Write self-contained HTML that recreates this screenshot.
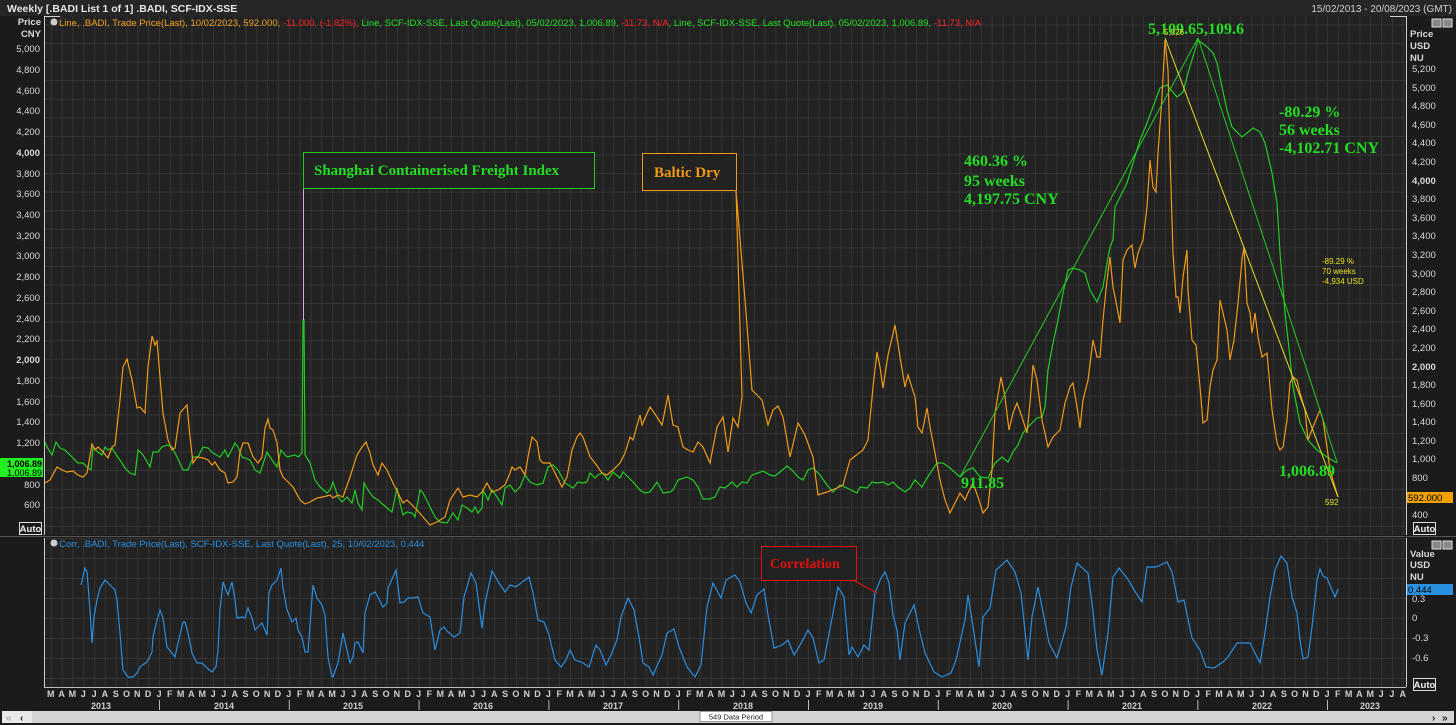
<!DOCTYPE html>
<html><head><meta charset="utf-8"><style>
html,body{margin:0;padding:0;background:#1b1b1b;}
svg{display:block;font-family:"Liberation Sans",sans-serif;}
</style></head><body>
<svg width="1456" height="725" viewBox="0 0 1456 725" xmlns="http://www.w3.org/2000/svg">
<defs>
<pattern id="gm" x="29.2" y="5.9" width="10.815" height="18.57" patternUnits="userSpaceOnUse">
<rect width="10.815" height="18.57" fill="#222"/>
<line x1="0.5" y1="0" x2="0.5" y2="18.57" stroke="#343434" stroke-width="1"/>
<line x1="0" y1="0.5" x2="10.815" y2="0.5" stroke="#343434" stroke-width="1"/>
</pattern>
<pattern id="gl" x="29.2" y="558" width="10.815" height="20" patternUnits="userSpaceOnUse">
<rect width="10.815" height="20" fill="#222"/>
<line x1="0.5" y1="0" x2="0.5" y2="20" stroke="#343434" stroke-width="1"/>
<line x1="0" y1="0.5" x2="10.815" y2="0.5" stroke="#343434" stroke-width="1"/>
</pattern>
</defs>
<rect width="1456" height="725" fill="#1b1b1b"/>
<rect x="0" y="0" width="1456" height="16" fill="#262626"/>
<text x="7" y="12" font-size="10.5" font-weight="bold" fill="#e6e6e6">Weekly [.BADI List 1 of 1] .BADI, SCF-IDX-SSE</text>
<text x="1452" y="12" font-size="10" fill="#d0d0d0" text-anchor="end">15/02/2013 - 20/08/2023 (GMT)</text>
<rect x="45" y="16" width="1361" height="519" fill="url(#gm)"/>
<rect x="45" y="538" width="1361" height="149" fill="url(#gl)"/>
<line x1="44.5" y1="16" x2="44.5" y2="535" stroke="#cfcfcf"/>
<line x1="1406.5" y1="16" x2="1406.5" y2="535" stroke="#cfcfcf"/>
<line x1="44.5" y1="538" x2="44.5" y2="687" stroke="#cfcfcf"/>
<line x1="1406.5" y1="538" x2="1406.5" y2="687" stroke="#cfcfcf"/>
<line x1="0" y1="536.5" x2="1456" y2="536.5" stroke="#555"/>
<line x1="44" y1="687.5" x2="1406" y2="687.5" stroke="#bbb"/>
<line x1="44" y1="16.5" x2="60" y2="16.5" stroke="#cfcfcf"/>
<line x1="1390" y1="16.5" x2="1406" y2="16.5" stroke="#cfcfcf"/>
<rect x="1432" y="19" width="9" height="8" fill="#888" stroke="#ddd"/><rect x="1443" y="19" width="9" height="8" fill="#888" stroke="#ddd"/>
<rect x="1432" y="541" width="9" height="8" fill="#888" stroke="#ddd"/><rect x="1443" y="541" width="9" height="8" fill="#888" stroke="#ddd"/>
<circle cx="54" cy="22" r="3.5" fill="#ccc"/>
<text x="59" y="26" font-size="9.5"><tspan fill="#f0a020">Line, .BADI, Trade Price(Last), 10/02/2023, 592.000, </tspan><tspan fill="#ff2020">-11.000, (-1.82%), </tspan><tspan fill="#20e020">Line, SCF-IDX-SSE, Last Quote(Last), 05/02/2023, 1,006.89, </tspan><tspan fill="#ff2020">-11.73, N/A</tspan><tspan fill="#20e020">, Line, SCF-IDX-SSE, Last Quote(Last), 05/02/2023, 1,006.89, </tspan><tspan fill="#ff2020">-11.73, N/A</tspan></text>
<circle cx="54" cy="543" r="3.5" fill="#ccc"/>
<text x="59" y="547" font-size="9.5" fill="#2a90e0">Corr, .BADI, Trade Price(Last), SCF-IDX-SSE, Last Quote(Last),  25,  10/02/2023, 0.444</text>
<g font-size="9.5" fill="#d8d8d8" text-anchor="end">
<text x="41" y="25" font-weight="bold">Price</text><text x="41" y="37" font-weight="bold">CNY</text>
<text x="40" y="52">5,000</text><text x="40" y="73">4,800</text><text x="40" y="94">4,600</text><text x="40" y="114">4,400</text><text x="40" y="135">4,200</text><text x="40" y="156" font-weight="bold">4,000</text><text x="40" y="177">3,800</text><text x="40" y="197">3,600</text><text x="40" y="218">3,400</text><text x="40" y="239">3,200</text><text x="40" y="259">3,000</text><text x="40" y="280">2,800</text><text x="40" y="301">2,600</text><text x="40" y="322">2,400</text><text x="40" y="342">2,200</text><text x="40" y="363" font-weight="bold">2,000</text><text x="40" y="384">1,800</text><text x="40" y="405">1,600</text><text x="40" y="425">1,400</text><text x="40" y="446">1,200</text><text x="40" y="488">800</text><text x="40" y="508">600</text>
</g>
<rect x="0" y="458" width="43" height="19" fill="#22ee22"/>
<text x="42" y="467" font-size="9" font-weight="bold" fill="#000" text-anchor="end">1,006.89</text>
<text x="42" y="476" font-size="9" fill="#000" text-anchor="end">1,006.89</text>
<rect x="19.5" y="522.5" width="22" height="12" fill="#1b1b1b" stroke="#ddd"/>
<text x="30.5" y="532" font-size="9.5" font-weight="bold" fill="#eee" text-anchor="middle">Auto</text>
<g font-size="9.5" fill="#d8d8d8">
<text x="1410" y="37" font-weight="bold">Price</text><text x="1410" y="49" font-weight="bold">USD</text><text x="1410" y="61" font-weight="bold">NU</text>
<text x="1412" y="72">5,200</text><text x="1412" y="91">5,000</text><text x="1412" y="109">4,800</text><text x="1412" y="128">4,600</text><text x="1412" y="146">4,400</text><text x="1412" y="165">4,200</text><text x="1412" y="184" font-weight="bold">4,000</text><text x="1412" y="202">3,800</text><text x="1412" y="221">3,600</text><text x="1412" y="239">3,400</text><text x="1412" y="258">3,200</text><text x="1412" y="277">3,000</text><text x="1412" y="295">2,800</text><text x="1412" y="314">2,600</text><text x="1412" y="332">2,400</text><text x="1412" y="351">2,200</text><text x="1412" y="370" font-weight="bold">2,000</text><text x="1412" y="388">1,800</text><text x="1412" y="407">1,600</text><text x="1412" y="425">1,400</text><text x="1412" y="444">1,200</text><text x="1412" y="462">1,000</text><text x="1412" y="481">800</text><text x="1412" y="518">400</text>
<text x="1410" y="557" font-weight="bold">Value</text><text x="1410" y="568" font-weight="bold">USD</text><text x="1410" y="580" font-weight="bold">NU</text>
<text x="1412" y="602">0.3</text><text x="1412" y="621">0</text><text x="1412" y="641">-0.3</text><text x="1412" y="661">-0.6</text>
</g>
<rect x="1407" y="492" width="46" height="11" fill="#f0a000"/>
<text x="1408" y="501" font-size="9.5" fill="#000">592.000</text>
<rect x="1407" y="584" width="46" height="11" fill="#2a90e0"/>
<text x="1408" y="593" font-size="9.5" fill="#000">0.444</text>
<rect x="1413.5" y="522.5" width="22" height="12" fill="#1b1b1b" stroke="#ddd"/>
<text x="1424.5" y="532" font-size="9.5" font-weight="bold" fill="#eee" text-anchor="middle">Auto</text>
<rect x="1413.5" y="678.5" width="22" height="12" fill="#1b1b1b" stroke="#ddd"/>
<text x="1424.5" y="688" font-size="9.5" font-weight="bold" fill="#eee" text-anchor="middle">Auto</text>
<polyline fill="none" stroke="#22cc22" stroke-width="1.2" points="45,442 47,447 52,455 56,442 60,448 65,450 72,457 78,463 83,463 88,468 91,470 93,447 98,452 102,455 105,447 108,450 112,448 115,453 120,460 125,468 130,473 135,475 138,450 143,455 150,467 153,452 158,452 162,447 167,445 172,447 177,457 183,470 188,470 193,457 198,457 203,447 208,448 213,453 220,457 225,450 228,457 235,443 238,447 242,457 250,460 255,470 260,473 267,452 272,460 277,467 281,450 287,457 295,455 298,457 302,453 303,320 304,320 305,455 310,463 315,480 320,487 327,493 330,490 333,482 338,497 342,502 347,497 352,503 355,490 358,503 362,510 364,483 368,490 373,497 378,500 387,508 392,512 397,488 400,503 403,515 407,512 412,513 415,517 420,490 423,493 428,503 435,517 440,522 447,523 453,513 458,520 462,505 467,508 472,512 475,507 478,513 482,508 483,490 488,500 492,490 497,497 502,505 505,488 510,485 515,492 520,487 525,475 530,482 537,485 543,483 548,467 553,465 558,470 565,483 573,488 578,482 583,483 587,482 590,473 595,478 598,475 603,473 608,480 613,472 620,478 623,472 628,477 633,482 640,490 645,493 650,492 657,482 660,487 663,493 670,492 673,490 678,480 687,477 693,480 698,487 703,499 710,499 715,497 720,487 725,488 732,482 737,487 742,482 747,483 752,475 758,473 763,471 770,475 775,476 780,472 787,466 792,470 798,477 803,480 808,470 813,468 820,475 827,485 833,492 840,485 847,488 857,493 860,487 867,488 872,482 877,483 883,482 888,485 893,482 898,487 905,492 910,488 915,480 922,487 927,478 937,463 943,463 950,468 960,477 967,470 973,468 980,477 988,478 995,463 1002,457 1008,462 1013,452 1018,445 1023,433 1030,425 1037,418 1042,417 1045,407 1048,370 1053,343 1058,320 1063,293 1068,270 1073,268 1080,270 1085,273 1090,290 1097,302 1103,287 1107,263 1110,247 1113,240 1115,207 1120,197 1127,183 1133,163 1140,140 1147,123 1153,107 1160,88 1167,85 1177,97 1183,92 1188,73 1195,50 1198,40 1207,47 1213,53 1217,63 1222,87 1227,110 1232,127 1242,137 1247,133 1253,128 1260,132 1265,143 1272,173 1277,203 1280,253 1285,313 1290,357 1293,387 1300,423 1308,440 1317,450 1327,457 1337,463"/>
<line x1="303.5" y1="152" x2="303.5" y2="320" stroke="#d8a8e0" stroke-width="1"/>
<polyline fill="none" stroke="#f09a18" stroke-width="1.2" points="45,483 50,480 57,467 62,470 67,472 73,471 78,475 83,477 87,473 92,444 95,450 98,447 103,452 108,458 112,447 115,445 120,400 123,367 127,359 132,380 137,408 140,407 145,413 148,367 152,336 155,345 157,341 160,377 163,413 168,440 172,450 175,448 180,413 187,405 190,437 193,463 197,457 203,458 208,460 212,465 215,462 220,470 225,473 228,483 233,482 237,477 240,452 243,443 248,443 253,457 258,463 262,457 265,428 268,419 270,428 273,430 277,443 280,470 283,477 288,482 293,487 300,500 305,504 310,502 317,498 323,497 330,495 333,498 338,495 343,497 350,477 357,455 362,447 366,442 370,453 373,465 378,475 382,463 387,470 393,483 398,493 403,503 407,500 412,505 417,510 423,517 430,525 437,522 440,520 445,517 450,500 458,488 463,497 470,495 477,497 482,492 487,483 492,492 498,490 505,485 510,473 512,467 515,470 520,467 525,475 528,457 532,437 537,442 540,460 543,463 550,463 555,473 562,487 567,477 572,450 577,437 580,433 583,437 590,457 595,463 602,473 607,475 613,470 620,463 625,453 630,437 633,440 640,415 642,425 645,418 650,407 657,417 662,425 668,395 673,425 678,427 683,447 688,450 693,452 698,442 703,447 710,463 717,427 723,417 728,452 733,418 738,427 742,397 736,190 745,300 752,390 757,395 762,400 768,425 773,410 778,406 783,417 790,457 798,423 805,435 813,457 818,495 827,492 837,488 843,485 850,460 863,450 868,440 873,387 877,352 880,367 883,388 888,355 895,325 900,357 905,387 908,375 915,397 918,427 922,433 927,408 930,427 935,453 940,480 945,500 950,513 955,503 960,493 965,500 968,493 973,483 978,497 983,513 988,507 992,470 995,413 1001,377 1005,397 1009,430 1013,413 1017,403 1022,417 1027,433 1030,403 1033,365 1037,380 1042,420 1048,447 1053,437 1060,430 1065,403 1070,387 1073,383 1077,407 1080,428 1083,400 1088,380 1093,340 1097,357 1100,357 1103,320 1107,280 1110,257 1113,287 1117,307 1120,323 1123,260 1127,250 1132,245 1135,268 1138,253 1143,240 1147,207 1150,160 1153,187 1156,192 1158,153 1162,97 1165,40 1168,70 1170,153 1173,253 1176,297 1178,297 1180,313 1183,277 1187,250 1188,290 1192,340 1196,345 1200,387 1203,423 1207,420 1210,387 1213,370 1217,360 1220,300 1223,313 1227,330 1230,360 1234,340 1238,303 1242,260 1244,247 1247,303 1250,313 1252,333 1255,313 1258,337 1262,357 1267,353 1272,410 1277,443 1280,450 1283,447 1287,420 1290,383 1293,377 1297,380 1300,393 1305,410 1308,440 1313,427 1320,410 1323,420 1327,447 1330,470 1335,487 1338,497"/>
<line x1="960" y1="477" x2="1198" y2="38" stroke="#22cc22" stroke-width="1"/>
<line x1="1198" y1="38" x2="1337" y2="462" stroke="#22cc22" stroke-width="1"/>
<line x1="1165" y1="38" x2="1338" y2="497" stroke="#e8e020" stroke-width="1"/>
<rect x="303.5" y="152.5" width="291" height="36" fill="#222" stroke="#22cc22"/>
<text x="314" y="175" font-family="Liberation Serif,serif" font-size="15" font-weight="bold" fill="#22dd22">Shanghai Containerised Freight Index</text>
<rect x="642.5" y="153.5" width="94" height="37" fill="#222" stroke="#f09a18"/>
<text x="654" y="177" font-family="Liberation Serif,serif" font-size="15" font-weight="bold" fill="#f09a18">Baltic Dry</text>
<g font-family="Liberation Serif,serif" font-weight="bold" fill="#22dd22" font-size="16">
<text x="1148" y="34">5,109.65,109.6</text>
<text x="964" y="166">460.36 %</text><text x="964" y="186">95 weeks</text><text x="964" y="204">4,197.75 CNY</text>
<text x="1279" y="117">-80.29 %</text><text x="1279" y="135">56 weeks</text><text x="1279" y="153">-4,102.71 CNY</text>
<text x="961" y="488">911.85</text>
<text x="1279" y="476">1,006.89</text>
</g>
<g font-size="8" fill="#e8e020">
<text x="1164" y="35">5,526</text>
<text x="1322" y="264">-89.29 %</text><text x="1322" y="274">70 weeks</text><text x="1322" y="284">-4,934 USD</text>
<text x="1325" y="505">592</text>
</g>
<polyline fill="none" stroke="#2a8ee0" stroke-width="1.2" points="81,585 85,568 87,572 90,610 92,643 94,617 97,600 100,588 105,580 110,585 115,590 117,600 120,633 123,670 128,677 133,677 137,673 140,667 147,662 152,652 153,637 157,620 160,610 163,618 167,647 172,653 175,657 178,643 183,622 185,622 188,633 192,653 197,663 202,663 207,668 212,672 216,667 218,650 220,610 223,582 228,595 232,582 235,600 237,618 242,617 245,618 248,608 252,618 255,630 262,623 267,635 269,593 272,585 277,580 281,568 283,588 287,610 292,622 296,618 298,630 302,637 305,652 308,652 313,585 317,598 322,605 325,615 328,657 332,677 333,677 338,663 343,633 347,650 350,663 353,657 355,643 358,642 363,653 365,613 370,595 375,592 378,597 383,607 387,603 388,588 393,577 396,570 400,603 404,602 408,598 413,598 418,597 423,613 430,617 435,650 440,630 444,627 448,632 454,637 460,633 464,597 471,573 476,583 482,628 485,603 492,571 499,583 505,592 510,585 516,587 521,583 529,577 533,593 538,620 544,622 549,635 555,660 561,667 566,660 570,650 575,660 583,663 589,667 596,645 600,650 606,665 611,655 617,640 621,617 628,598 634,610 639,637 643,663 649,667 653,675 662,655 667,633 674,629 679,647 687,667 695,677 701,665 707,607 713,583 721,598 726,580 735,575 740,582 746,603 751,613 757,595 764,589 768,615 774,648 782,645 788,640 794,655 799,647 808,630 813,638 819,663 824,660 833,613 838,587 844,597 849,655 852,647 858,657 864,645 869,650 875,593 881,578 885,572 889,583 893,615 897,630 900,660 905,623 914,605 920,633 925,653 934,672 942,677 951,673 956,660 965,620 968,595 972,620 979,667 983,617 990,608 996,570 1007,560 1015,572 1021,593 1028,660 1032,617 1038,587 1043,612 1049,643 1057,658 1066,627 1071,587 1077,563 1088,573 1092,603 1097,650 1102,675 1108,633 1113,577 1119,568 1127,578 1136,593 1142,602 1147,567 1156,567 1167,562 1172,572 1178,602 1184,600 1192,638 1200,650 1206,667 1214,668 1223,662 1228,657 1237,643 1248,643 1250,643 1255,653 1260,663 1265,633 1270,597 1275,570 1281,556 1287,563 1292,597 1297,613 1300,640 1303,659 1308,657 1312,627 1317,580 1320,569 1323,576 1327,578 1332,590 1335,597 1338,589"/>
<rect x="761.5" y="546.5" width="95" height="34" fill="#222" stroke="#e01010"/>
<text x="770" y="568" font-family="Liberation Serif,serif" font-size="14" font-weight="bold" fill="#e01010">Correlation</text>
<line x1="853" y1="580" x2="877" y2="593" stroke="#e01010"/>
<g font-size="9" font-weight="bold" fill="#cfcfcf" text-anchor="middle">
<text x="50.8" y="697">M</text><text x="61.6" y="697">A</text><text x="72.4" y="697">M</text><text x="83.3" y="697">J</text><text x="94.1" y="697">J</text><text x="104.9" y="697">A</text><text x="115.7" y="697">S</text><text x="126.5" y="697">O</text><text x="137.3" y="697">N</text><text x="148.1" y="697">D</text>
</g>
<g id="yr" font-size="9" font-weight="bold" fill="#cfcfcf" text-anchor="middle">
<text x="159" y="697">J</text><text x="169.8" y="697">F</text><text x="180.6" y="697">M</text><text x="191.4" y="697">A</text><text x="202.3" y="697">M</text><text x="213.1" y="697">J</text><text x="223.9" y="697">J</text><text x="234.7" y="697">A</text><text x="245.5" y="697">S</text><text x="256.3" y="697">O</text><text x="267.1" y="697">N</text><text x="277.9" y="697">D</text>
<line x1="159.5" y1="700" x2="159.5" y2="710" stroke="#bbb"/>
</g>
<use href="#yr" x="129.8"/><use href="#yr" x="259.6"/><use href="#yr" x="389.4"/><use href="#yr" x="519.2"/><use href="#yr" x="649"/><use href="#yr" x="778.8"/><use href="#yr" x="908.6"/><use href="#yr" x="1038.4"/>
<g font-size="9" font-weight="bold" fill="#cfcfcf" text-anchor="middle">
<text x="1327" y="697">J</text><text x="1337.8" y="697">F</text><text x="1348.6" y="697">M</text><text x="1359.4" y="697">A</text><text x="1370.3" y="697">M</text><text x="1381.1" y="697">J</text><text x="1391.9" y="697">J</text><text x="1402.7" y="697">A</text>
<line x1="1327.5" y1="700" x2="1327.5" y2="710" stroke="#bbb"/>
<text x="101" y="709">2013</text><text x="224" y="709">2014</text><text x="353" y="709">2015</text><text x="483" y="709">2016</text><text x="613" y="709">2017</text><text x="743" y="709">2018</text><text x="873" y="709">2019</text><text x="1002" y="709">2020</text><text x="1132" y="709">2021</text><text x="1262" y="709">2022</text><text x="1370" y="709">2023</text>
</g>
<rect x="2" y="711" width="1452" height="12" fill="#d4d4d4"/>
<rect x="2" y="711" width="30" height="12" fill="#e8e8e8"/>
<text x="6" y="721" font-size="10" fill="#999">«</text><text x="20" y="721" font-size="10" fill="#222" font-weight="bold">‹</text>
<text x="1432" y="721" font-size="10" fill="#222" font-weight="bold">›</text><text x="1442" y="721" font-size="10" fill="#222" font-weight="bold">»</text>
<rect x="700" y="711.5" width="72" height="10" fill="#fff" stroke="#999"/>
<text x="736" y="719.5" font-size="7.5" fill="#222" text-anchor="middle">549 Data Period</text>
</svg>
</body></html>
